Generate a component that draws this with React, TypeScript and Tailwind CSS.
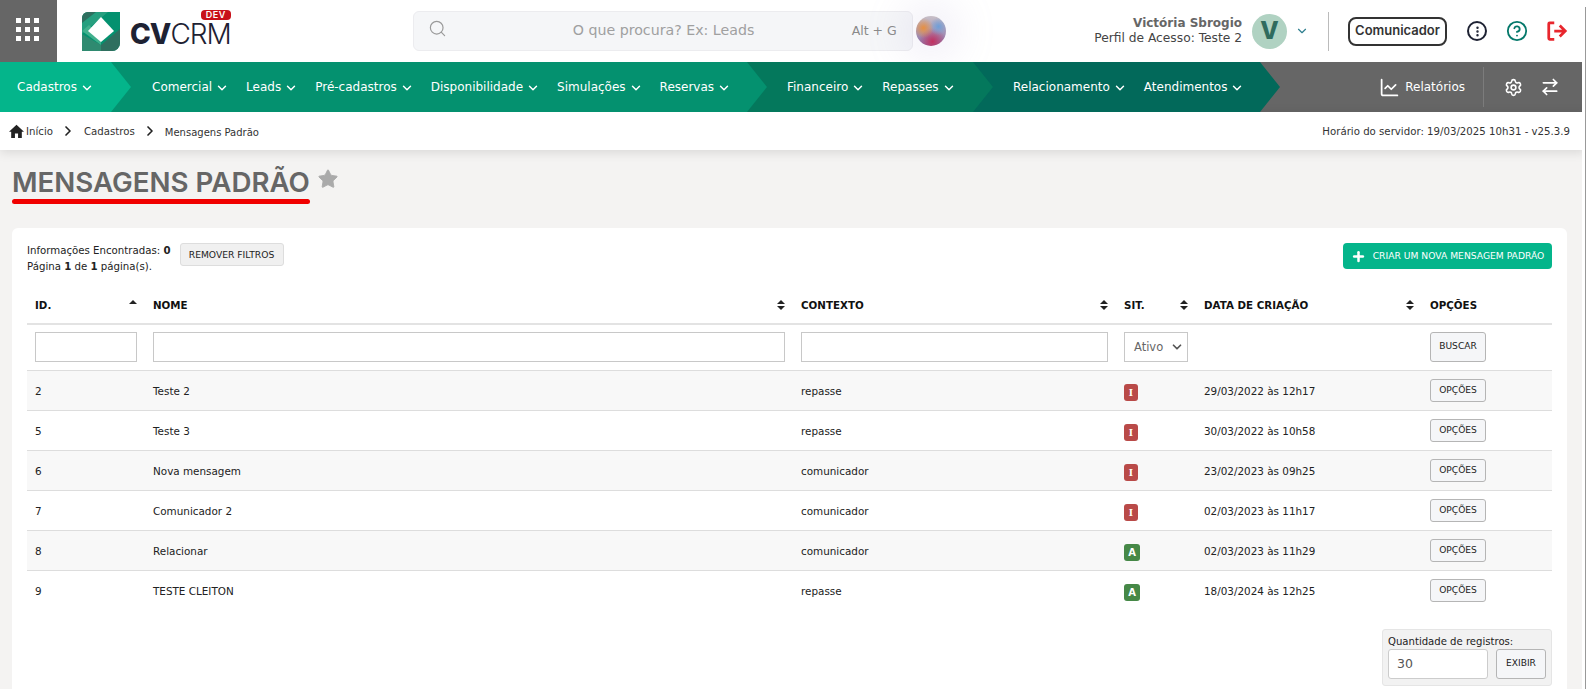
import { ChevronDown, ChevronRight, ChartLine, Settings, ArrowRightLeft, HelpCircle, EllipsisVertical, Search, Plus, Star } from "lucide-react";

const VERDANA = "font-['DejaVu_Sans',sans-serif]";

type Row = { id: number; nome: string; contexto: string; sit: "I" | "A"; data: string };

const rows: Row[] = [
  { id: 2, nome: "Teste 2", contexto: "repasse", sit: "I", data: "29/03/2022 às 12h17" },
  { id: 5, nome: "Teste 3", contexto: "repasse", sit: "I", data: "30/03/2022 às 10h58" },
  { id: 6, nome: "Nova mensagem", contexto: "comunicador", sit: "I", data: "23/02/2023 às 09h25" },
  { id: 7, nome: "Comunicador 2", contexto: "comunicador", sit: "I", data: "02/03/2023 às 11h17" },
  { id: 8, nome: "Relacionar", contexto: "comunicador", sit: "A", data: "02/03/2023 às 11h29" },
  { id: 9, nome: "TESTE CLEITON", contexto: "repasse", sit: "A", data: "18/03/2024 às 12h25" },
];

function NavItem({ label }: { label: string }) {
  return (
    <span className="flex items-center gap-[3px] text-[12px] text-white whitespace-nowrap">
      {label}
      <ChevronDown size={14} strokeWidth={2.5} className="mt-[1px]" />
    </span>
  );
}

function Logo() {
  return (
    <div className="flex items-center gap-[10px] ml-[25px]">
      <svg width="38" height="39" viewBox="0 0 38 39">
        <path d="M6 0H38V31a8 8 0 0 1-8 8H0V6a6 6 0 0 1 6-6z" fill="#04916f" />
        <path d="M0 6a6 6 0 0 1 6-6H14L0 11z" fill="#2f6f5f" />
        <path d="M0 11L14 0H26L0 22z" fill="#3ea98a" opacity="0.6" />
        <path d="M38 17V31a8 8 0 0 1-8 8H19V33z" fill="#2f6f5f" />
        <path d="M0 22L19 33V39H0z" fill="#2f8a70" />
        <path d="M0 19L7 13 19 24 19 33z" fill="#41b08d" />
        <path d="M19 5L32 19 19 30 6 19z" fill="#ffffff" />
      </svg>
      <div className="relative flex items-baseline font-['Inter',sans-serif] text-[#1e2233] text-[28px] leading-none tracking-[-1px] mt-[6px]">
        <span className="font-extrabold">CV</span>
        <span className="font-light">CRM</span>
        <span className="absolute -top-[10px] right-0 bg-[#c8101a] text-white text-[9px] font-semibold tracking-[0.5px] leading-[10px] px-[5px] rounded-sm">DEV</span>
      </div>
    </div>
  );
}

function TopBar() {
  return (
    <div className="h-[62px] bg-white flex items-center">
      <div className="w-[57px] h-full bg-[#666666] grid grid-cols-[5px_5px_5px] gap-[4px] place-content-center pr-[3px] pb-[3px]">
        {Array.from({ length: 9 }).map((_, i) => (
          <span key={i} className="w-[5px] h-[5px] bg-white" />
        ))}
      </div>
      <Logo />
      <div className={`ml-[182px] w-[500px] h-[40px] rounded-md bg-[#f5f6f8] border border-[#ececef] flex items-center pl-[14px] pr-[15px] ${VERDANA}`}>
        <Search size={19} strokeWidth={1.5} className="text-[#9a9a9a] -mt-[6px]" />
        <span className="ml-[126px] text-[14.2px] text-[#a0a0a0]">O que procura? Ex: Leads</span>
        <span className="ml-auto text-[12.5px] text-[#8a8a8a]">Alt + G</span>
      </div>
      <div className="ml-[3px] w-[30px] h-[30px] rounded-full shadow-[0_0_40px_12px_rgba(170,160,210,0.18)] bg-[radial-gradient(circle_at_25%_40%,#e89040_0,transparent_35%),radial-gradient(circle_at_75%_35%,#6f9fd8_0,transparent_30%),radial-gradient(circle_at_55%_85%,#c2305f_0,transparent_45%),linear-gradient(#c8c0c8,#8a70a8)]" />
      <div className={`ml-auto text-right leading-[15px] ${VERDANA}`}>
        <div className="text-[12px] font-bold text-[#666666]">Victória Sbrogio</div>
        <div className="text-[12.25px] text-[#444444]">Perfil de Acesso: Teste 2</div>
      </div>
      <div className="ml-[10px] w-[35px] h-[35px] rounded-full bg-[#b0d2c2] flex items-center justify-center font-['Inter',sans-serif] font-extrabold text-[24px] text-[#2f6b5e]">V</div>
      <ChevronDown size={14} className="ml-[8px] text-[#2f7f8f]" />
      <div className="ml-[19px] w-px h-[39px] bg-[#bbbbbb]" />
      <div className="ml-[19px] w-[99px] h-[29px] rounded-lg border-2 border-[#333333] flex items-center justify-center font-['Inter',sans-serif] font-semibold text-[13px] text-[#333333]">Comunicador</div>
      <div className="ml-[20px] w-5 h-5 rounded-full border-2 border-[#1e2233] flex items-center justify-center text-[#1e2233]">
        <EllipsisVertical size={13} strokeWidth={2.5} />
      </div>
      <HelpCircle size={22} strokeWidth={2} className="ml-[19px] text-[#04786a]" />
      <svg width="22" height="22" viewBox="0 0 24 24" fill="none" stroke="#e8262d" strokeWidth="3" className="ml-[18px] mr-[18px]">
        <path d="M9 3H4a1 1 0 0 0-1 1v16a1 1 0 0 0 1 1h5" />
        <path d="M9 12H21M15 6l6 6-6 6" />
      </svg>
    </div>
  );
}

function NavBar() {
  const arrow = "[clip-path:polygon(0_0,calc(100%-20px)_0,100%_50%,calc(100%-20px)_100%,0_100%)]";
  return (
    <div className={`h-[50px] flex mr-[4px] bg-[#666666] ${VERDANA}`}>
      <div className={`relative z-40 w-[131px] -mr-[20px] pl-[17px] flex items-center bg-[#04b58b] ${arrow}`}>
        <NavItem label="Cadastros" />
      </div>
      <div className={`relative z-30 w-[656px] -mr-[20px] pl-[41px] flex items-center gap-[17px] bg-[#04916f] ${arrow}`}>
        <NavItem label="Comercial" />
        <NavItem label="Leads" />
        <NavItem label="Pré-cadastros" />
        <NavItem label="Disponibilidade" />
        <NavItem label="Simulações" />
        <NavItem label="Reservas" />
      </div>
      <div className={`relative z-20 w-[246px] -mr-[20px] pl-[40px] flex items-center gap-[17px] bg-[#04785c] ${arrow}`}>
        <NavItem label="Financeiro" />
        <NavItem label="Repasses" />
      </div>
      <div className={`relative z-10 w-[307px] pl-[40px] flex items-center gap-[17px] bg-[#02695a] ${arrow}`}>
        <NavItem label="Relacionamento" />
        <NavItem label="Atendimentos" />
      </div>
      <div className="ml-auto flex items-center text-white">
        <ChartLine size={21} strokeWidth={2} className="mr-[5px]" />
        <span className="text-[12px]">Relatórios</span>
        <div className="ml-[18px] mr-[20px] w-px h-[40px] bg-[#7c7c7c]" />
        <Settings size={19} strokeWidth={2} />
        <ArrowRightLeft size={20} strokeWidth={2} className="ml-[17px] mr-[22px]" />
      </div>
    </div>
  );
}

function Breadcrumb() {
  return (
    <div className={`relative h-[38px] bg-white flex items-center pl-[9px] pr-[16px] text-[10.2px] text-[#333333] shadow-[0_2px_12px_rgba(0,0,0,0.12)] ${VERDANA}`}>
      <svg width="15" height="14" viewBox="0 0 24 22" className="mr-[2px]">
        <path d="M12 1L0 12h3.5v10h6v-7h5v7h6V12H24z" fill="#222222" />
      </svg>
      <span className="pt-[2px]">Início</span>
      <ChevronRight size={16} strokeWidth={2.5} className="ml-[7px] mr-[8px] text-[#222222]" />
      <span className="pt-[2px]">Cadastros</span>
      <ChevronRight size={16} strokeWidth={2.5} className="mx-[7px] text-[#222222]" />
      <span className="pt-[2px] text-[10px]">Mensagens Padrão</span>
      <span className="ml-auto pt-[2px]">Horário do servidor: 19/03/2025 10h31 - v25.3.9</span>
    </div>
  );
}

function SortIcon({ up }: { up?: boolean }) {
  return (
    <svg width="8" height="10" viewBox="0 0 8 10" className="shrink-0">
      <path d="M4 0L8 4H0z" fill="#222222" />
      {!up && <path d="M4 10L0 6H8z" fill="#222222" />}
    </svg>
  );
}

function Th({ label, up, sort = true }: { label: string; up?: boolean; sort?: boolean }) {
  return (
    <th className="px-2 pb-[10px] text-left align-bottom border-b-2 border-[#e3e3e3]">
      <div className="flex items-center justify-between text-[10.3px] font-bold text-[#111111]">
        {label}
        {sort && <SortIcon up={up} />}
      </div>
    </th>
  );
}

function SitBadge({ sit }: { sit: "I" | "A" }) {
  return (
    <span className={`inline-flex items-center justify-center h-[17px] rounded-[3px] text-white text-[10px] font-bold ${sit === "I" ? "w-[14px] bg-[#b94a48] font-['Liberation_Serif',serif] text-[11px]" : "w-[16px] bg-[#468847]"}`}>
      {sit}
    </span>
  );
}

function Table() {
  return (
    <table className="w-full table-fixed border-collapse text-[10.4px] text-[#222222] mt-[10px]">
      <colgroup>
        <col className="w-[118px]" />
        <col className="w-[648px]" />
        <col className="w-[323px]" />
        <col className="w-[80px]" />
        <col className="w-[226px]" />
        <col />
      </colgroup>
      <thead>
        <tr className="h-[39px]">
          <Th label="ID." up />
          <Th label="NOME" />
          <Th label="CONTEXTO" />
          <Th label="SIT." />
          <Th label="DATA DE CRIAÇÃO" />
          <Th label="OPÇÕES" sort={false} />
        </tr>
      </thead>
      <tbody>
        <tr className="h-[46px] border-b border-[#dddddd]">
          <td className="px-2"><input className="block w-full h-[30px] border border-[#c8c8c8] bg-white" /></td>
          <td className="px-2"><input className="block w-full h-[30px] border border-[#c8c8c8] bg-white" /></td>
          <td className="px-2"><input className="block w-full h-[30px] border border-[#c8c8c8] bg-white" /></td>
          <td className="px-2">
            <div className="h-[30px] border border-[#c8c8c8] bg-white flex items-center justify-between pl-[9px] pr-[3px] text-[11.5px] text-[#666666]">
              Ativo
              <ChevronDown size={14} strokeWidth={3} className="text-[#555555]" />
            </div>
          </td>
          <td className="px-2" />
          <td className="px-2">
            <button className="w-[56px] h-[30px] rounded-[3px] border border-[#b5b5b5] bg-[#f5f6f8] text-[9.1px] text-[#222222]">BUSCAR</button>
          </td>
        </tr>
        {rows.map((r, i) => (
          <tr key={r.id} className={`h-[40px] ${i % 2 === 0 ? "bg-[#f8f8f8]" : "bg-white"} ${i < rows.length - 1 ? "border-b border-[#dddddd]" : ""}`}>
            <td className="px-2 pt-[4px]">{r.id}</td>
            <td className="px-2 pt-[4px]">{r.nome}</td>
            <td className="px-2 pt-[4px]">{r.contexto}</td>
            <td className="px-2 pt-[4px]"><SitBadge sit={r.sit} /></td>
            <td className="px-2 pt-[4px]">{r.data}</td>
            <td className="px-2 pt-[4px]">
              <button className="block w-[56px] h-[23px] -mt-[3px] rounded-[3px] border border-[#b5b5b5] bg-[#f5f6f8] text-[9.1px] text-[#222222]">OPÇÕES</button>
            </td>
          </tr>
        ))}
      </tbody>
    </table>
  );
}

export default function App() {
  return (
    <div className="relative h-[689px] overflow-hidden bg-[#f4f3f2] font-['DejaVu_Sans',sans-serif]">
      <TopBar />
      <NavBar />
      <Breadcrumb />

      <div className="px-[12px]">
        <div className="flex items-start pt-[13px] h-[78px]">
          <h1 className="font-['Inter',sans-serif] font-semibold text-[27.7px] leading-[38px] text-[#666666] relative">
            MENSAGENS PADRÃO
            <span className="absolute left-0 right-0 top-[36px] h-[5px] rounded-full bg-[#f00000]" />
          </h1>
          <Star size={22} fill="#aaaaaa" strokeWidth={1} className="ml-[7px] mt-[5px] text-[#aaaaaa]" />
        </div>

        <div className="w-[1555px] bg-white rounded-t-md px-[15px] pt-[15px] pb-6">
          <div className="flex items-start">
            <div className="text-[10.2px] leading-[16px] text-[#222222]">
              <div>Informações Encontradas: <b>0</b></div>
              <div>Página <b>1</b> de <b>1</b> página(s).</div>
            </div>
            <button className="ml-[9px] w-[104px] h-[23px] rounded-[3px] border border-[#dddddd] bg-[#f0f0f0] text-[9.2px] text-[#222222]">REMOVER FILTROS</button>
            <button className="ml-auto w-[209px] h-[26px] rounded-[4px] bg-[#04b58b] flex items-center justify-center gap-[7px] text-[9.2px] text-white">
              <Plus size={15} strokeWidth={4} />
              CRIAR UM NOVA MENSAGEM PADRÃO
            </button>
          </div>

          <Table />

          <div className="flex justify-end mt-[19px]">
            <div className="w-[170px] h-[57px] rounded-[3px] border border-[#e5e5e5] bg-[#f2f2f2] px-[5px] pt-[5px]">
              <div className="text-[10.1px] leading-[13px] text-[#222222]">Quantidade de registros:</div>
              <div className="flex justify-between mt-[1px]">
                <div className="w-[100px] h-[30px] rounded-[3px] border border-[#cccccc] bg-white flex items-center pl-2 text-[12.5px] text-[#555555]">30</div>
                <button className="w-[50px] h-[30px] rounded-[3px] border border-[#b5b5b5] bg-[#f5f6f8] text-[9.1px] text-[#222222]">EXIBIR</button>
              </div>
            </div>
          </div>
        </div>
      </div>

      {/* window edge on the right */}
      <div className="absolute right-0 top-0 bottom-0 w-[4px] bg-white">
        <div className="absolute right-0 top-[7px] bottom-0 w-px bg-[#999999]" />
      </div>
    </div>
  );
}
